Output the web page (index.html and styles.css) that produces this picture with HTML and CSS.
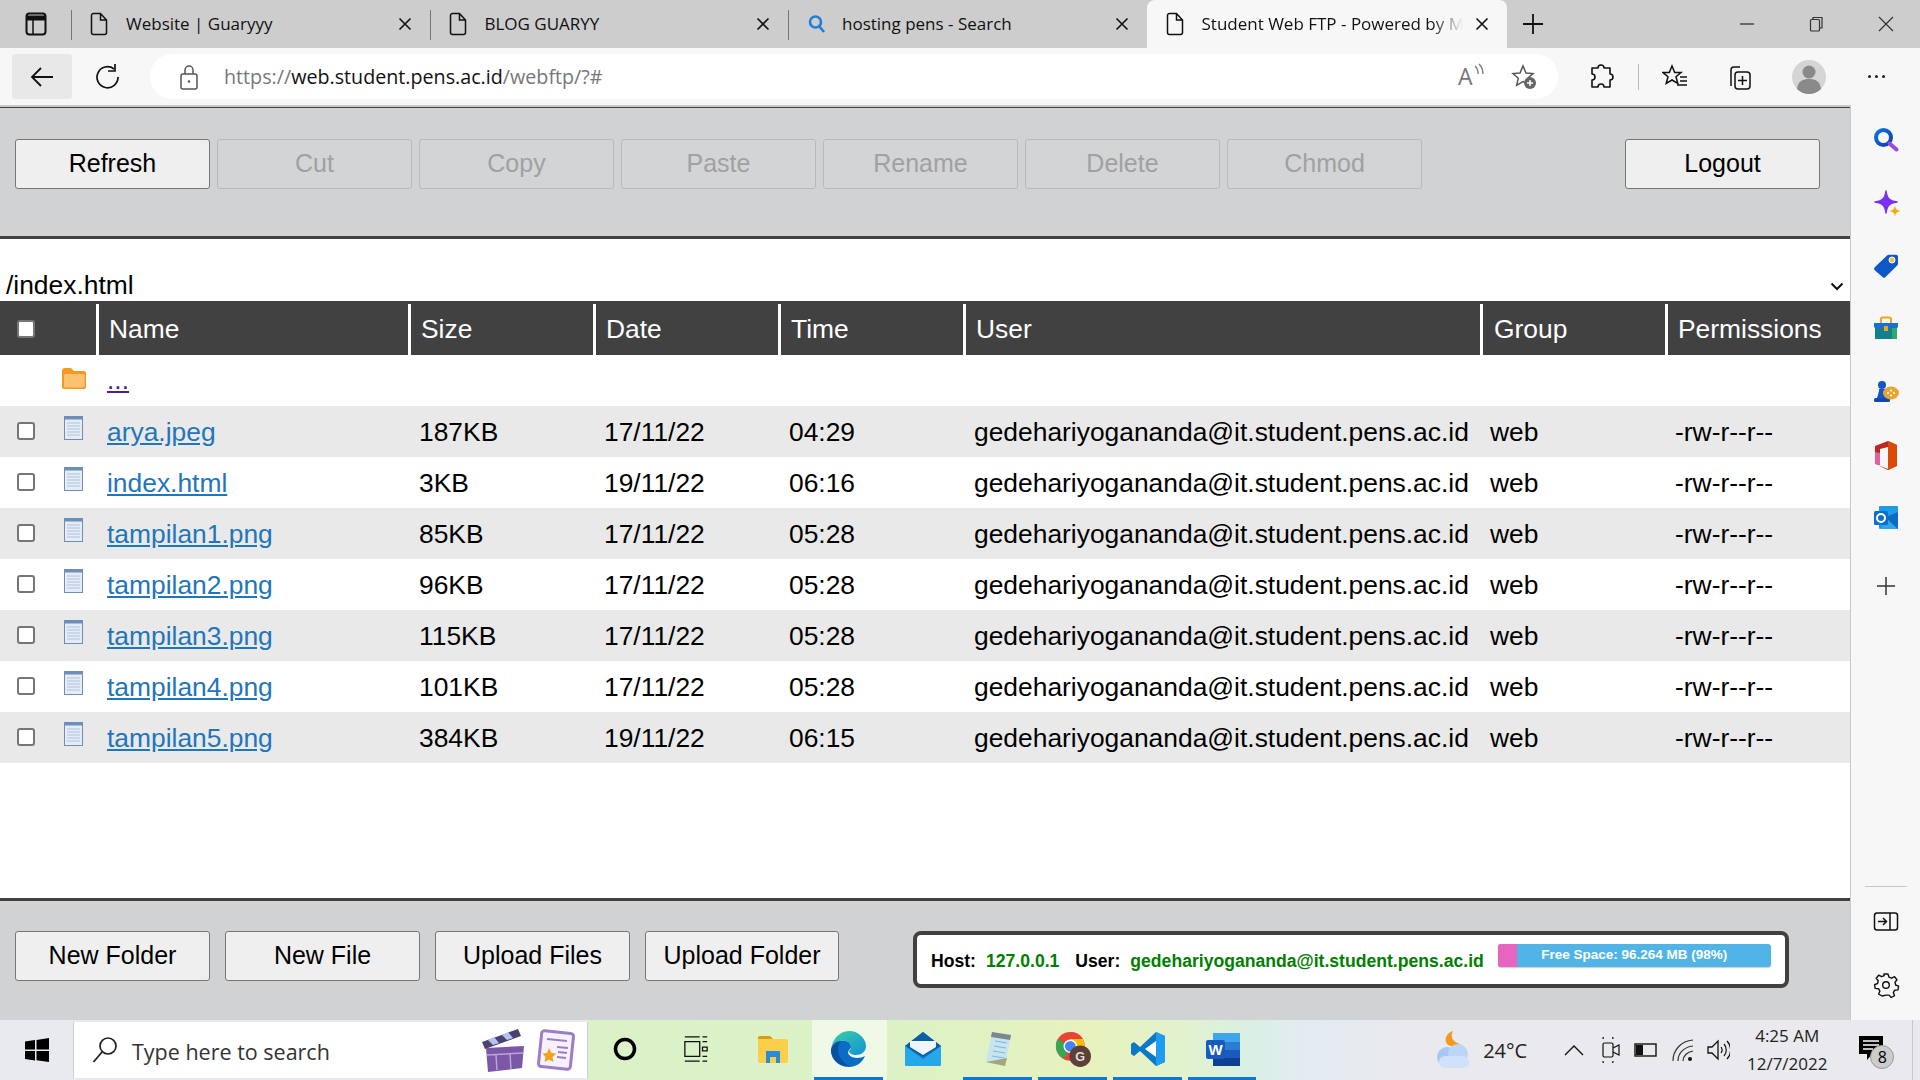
FILE: index.html
```html
<!DOCTYPE html>
<html lang="en">
<head>
<meta charset="utf-8">
<title>Student Web FTP - Powered by Monsta</title>
<link rel="stylesheet" href="styles.css">
</head>
<body>
<svg class="defs" width="0" height="0" aria-hidden="true">
  <symbol id="tabfile" viewBox="0 0 20 24"><path d="M2.500 3.500a2 2 0 0 1 2-2h7l6 6.500v12.500a2 2 0 0 1-2 2h-11a2 2 0 0 1-2-2zM11.500 1.500v6.500h6" fill="none" stroke="#111" stroke-width="1.500"/></symbol>
  <symbol id="x" viewBox="0 0 14 14"><path d="M1.500 1.500l11 11M12.500 1.500l-11 11" fill="none" stroke="#111" stroke-width="1.600"/></symbol>
  <symbol id="docicon" viewBox="0 0 20 25"><rect x="0.500" y="0.500" width="18" height="23" fill="#e6ecf6" stroke="#6f8db8"/><rect x="0.500" y="0.500" width="18" height="3" fill="#6f8db8"/><path d="M3 7h13M3 10h13M3 13h13M3 16h13M3 19h13" stroke="#aebfdc" stroke-width="1.200"/></symbol>
</svg>
<div class="browser">
  <header class="tabstrip">
    <div class="tabside">
      <svg class="ic22" viewBox="0 0 22 24"><rect x="1.500" y="1.500" width="19" height="21" rx="3" fill="none" stroke="#111" stroke-width="2"/><path d="M1.500 6h19" stroke="#111" stroke-width="5"/><path d="M8 8v14" stroke="#111" stroke-width="1.500"/></svg>
    </div>
    <div class="tab">
      <svg class="tabicon"><use href="#tabfile"/></svg>
      <span class="tabtitle">Website | Guaryyy</span>
      <svg class="tabclose"><use href="#x"/></svg>
    </div>
    <div class="tab">
      <svg class="tabicon"><use href="#tabfile"/></svg>
      <span class="tabtitle">BLOG GUARYY</span>
      <svg class="tabclose"><use href="#x"/></svg>
    </div>
    <div class="tab">
      <svg class="tabicon search" viewBox="0 0 18 20"><circle cx="7.500" cy="8" r="5.500" fill="none" stroke="#1f7fd6" stroke-width="2.600"/><path d="M11 12l5 6" stroke="#1f7fd6" stroke-width="2.600"/></svg>
      <span class="tabtitle">hosting pens - Search</span>
      <svg class="tabclose"><use href="#x"/></svg>
    </div>
    <div class="tab active">
      <svg class="tabicon"><use href="#tabfile"/></svg>
      <span class="tabtitle fade">Student Web FTP - Powered by Monsta</span>
      <svg class="tabclose"><use href="#x"/></svg>
    </div>
    <svg class="newtab" viewBox="0 0 22 22"><path d="M11 1v20M1 11h20" stroke="#111" stroke-width="1.800"/></svg>
    <div class="winctl">
      <svg class="wc wc-min" viewBox="0 0 16 16"><path d="M1 8h14" stroke="#333" stroke-width="1.300"/></svg>
      <svg class="wc" viewBox="0 0 16 16"><path d="M5 3V1.500h9v10.500h-2" fill="none" stroke="#333" stroke-width="1.200"/><rect x="2.500" y="3.500" width="9" height="11.500" rx="1" fill="none" stroke="#333" stroke-width="1.200"/></svg>
      <svg class="wc" viewBox="0 0 16 16"><path d="M1 1l14 14M15 1L1 15" stroke="#333" stroke-width="1.200"/></svg>
    </div>
  </header>

  <nav class="toolbar">
    <div class="navbtn hover">
      <svg class="ic26" viewBox="0 0 26 26"><path d="M24 13H3M12 4l-9 9 9 9" fill="none" stroke="#111" stroke-width="1.800"/></svg>
    </div>
    <div class="navbtn reload">
      <svg class="ic26" viewBox="0 0 26 26"><path d="M19 5a10.500 10.500 0 1 0 4 8" fill="none" stroke="#111" stroke-width="1.700"/><path d="M20 0v7h-7" fill="none" stroke="#111" stroke-width="1.700"/></svg>
    </div>
    <div class="urlbar">
      <svg class="lock" viewBox="0 0 20 26"><rect x="2" y="10" width="16" height="15" rx="2" fill="none" stroke="#555" stroke-width="1.500"/><path d="M6 10V6a4 4 0 0 1 8 0v4" fill="none" stroke="#555" stroke-width="1.500"/><circle cx="10" cy="17.500" r="1.300" fill="#555"/></svg>
      <span class="url"><span class="dim">https://</span>web.student.pens.ac.id<span class="dim">/webftp/?#</span></span>
      <span class="readaloud"><span class="readA">A</span><svg class="waves" viewBox="0 0 12 14"><path d="M2 3a10 10 0 0 1 3 8M6 1a14 14 0 0 1 4 10" fill="none" stroke="#777" stroke-width="1.300"/></svg></span>
      <svg class="ic26 favadd" viewBox="0 0 26 26"><path d="M12 2l3 7 7 .6-5.300 4.700 1.600 7-6.300-3.700-6.300 3.700 1.600-7L2 9.600 9 9z" fill="none" stroke="#555" stroke-width="1.500"/><circle cx="19" cy="19" r="6" fill="#666"/><path d="M19 16v6M16 19h6" stroke="#fff" stroke-width="1.500"/></svg>
    </div>
    <div class="tools">
      <svg class="ic26 tl-ext" viewBox="0 0 26 26"><path d="M10 4a3 3 0 0 1 6 0h6v6a3 3 0 0 1 0 6v7h-6a3 3 0 0 0-6 0H4v-7a3 3 0 0 0 0-6V4z" fill="none" stroke="#111" stroke-width="1.600" stroke-linejoin="round"/></svg>
      <span class="toolsep"></span>
      <svg class="ic26 tl-fav" viewBox="0 0 26 26"><path d="M10 2l2.700 6.500H19l-5 4.300 1.800 6.700L10 16l-5.800 3.500L6 12.800 1 8.500h6.300z" fill="none" stroke="#111" stroke-width="1.500"/><path d="M18 13h7M18 17h7M15 21h10" stroke="#111" stroke-width="1.500"/></svg>
      <svg class="ic26 tl-col" viewBox="0 0 26 26"><path d="M5 22V6a3 3 0 0 1 3-3h6" fill="none" stroke="#111" stroke-width="1.500"/><rect x="9" y="8" width="15" height="17" rx="3" fill="none" stroke="#111" stroke-width="1.500"/><path d="M16.500 12v9M12 16.500h9" stroke="#111" stroke-width="1.500"/></svg>
      <svg class="avatar" viewBox="0 0 34 34"><circle cx="17" cy="17" r="17" fill="#d5d5d5"/><circle cx="17" cy="12" r="6.500" fill="#8a8a8a"/><path d="M5 29c1-8 6-10 12-10s11 2 12 10a17 17 0 0 1-24 0z" fill="#8a8a8a"/></svg>
      <span class="dots"><i></i><i></i><i></i></span>
    </div>
  </nav>

  <div class="main">
    <main class="page">
      <section class="topbar">
        <button class="btn">Refresh</button>
        <button class="btn" disabled>Cut</button>
        <button class="btn" disabled>Copy</button>
        <button class="btn" disabled>Paste</button>
        <button class="btn" disabled>Rename</button>
        <button class="btn" disabled>Delete</button>
        <button class="btn" disabled>Chmod</button>
        <button class="btn logout">Logout</button>
      </section>

      <div class="pathrow">
        <span>/index.html</span>
        <svg class="chev" viewBox="0 0 14 9"><path d="M1.500 1.500L7 7l5.500-5.500" fill="none" stroke="#111" stroke-width="2"/></svg>
      </div>

      <div class="filetable">
        <div class="row head">
          <div class="hc first"><input type="checkbox" class="chk" aria-label="all"></div>
          <div class="hc">Name</div><div class="hc">Size</div><div class="hc">Date</div><div class="hc">Time</div><div class="hc">User</div><div class="hc">Group</div><div class="hc">Permissions</div>
        </div>
        <div class="row">
          <div class="c0"><svg class="foldericon" viewBox="0 0 24 21"><path d="M0 3a3 3 0 0 1 3-3h6l3 3h10a2 2 0 0 1 2 2v14a2 2 0 0 1-2 2H2a2 2 0 0 1-2-2z" fill="#f49a22"/><rect x="2" y="6" width="20.500" height="13.500" rx="1.500" fill="#fcc271"/></svg></div>
          <div class="c up"><a href="#" class="visited">...</a></div><div class="c"></div><div class="c"></div><div class="c"></div><div class="c"></div><div class="c"></div><div class="c"></div>
        </div>
        <div class="row alt">
          <div class="c0"><input type="checkbox" class="chk" aria-label="select"><svg class="docicon"><use href="#docicon"/></svg></div>
          <div class="c"><a href="#">arya.jpeg</a></div><div class="c">187KB</div><div class="c">17/11/22</div><div class="c">04:29</div><div class="c">gedehariyogananda@it.student.pens.ac.id</div><div class="c">web</div><div class="c">-rw-r--r--</div>
        </div>
        <div class="row">
          <div class="c0"><input type="checkbox" class="chk" aria-label="select"><svg class="docicon"><use href="#docicon"/></svg></div>
          <div class="c"><a href="#">index.html</a></div><div class="c">3KB</div><div class="c">19/11/22</div><div class="c">06:16</div><div class="c">gedehariyogananda@it.student.pens.ac.id</div><div class="c">web</div><div class="c">-rw-r--r--</div>
        </div>
        <div class="row alt">
          <div class="c0"><input type="checkbox" class="chk" aria-label="select"><svg class="docicon"><use href="#docicon"/></svg></div>
          <div class="c"><a href="#">tampilan1.png</a></div><div class="c">85KB</div><div class="c">17/11/22</div><div class="c">05:28</div><div class="c">gedehariyogananda@it.student.pens.ac.id</div><div class="c">web</div><div class="c">-rw-r--r--</div>
        </div>
        <div class="row">
          <div class="c0"><input type="checkbox" class="chk" aria-label="select"><svg class="docicon"><use href="#docicon"/></svg></div>
          <div class="c"><a href="#">tampilan2.png</a></div><div class="c">96KB</div><div class="c">17/11/22</div><div class="c">05:28</div><div class="c">gedehariyogananda@it.student.pens.ac.id</div><div class="c">web</div><div class="c">-rw-r--r--</div>
        </div>
        <div class="row alt">
          <div class="c0"><input type="checkbox" class="chk" aria-label="select"><svg class="docicon"><use href="#docicon"/></svg></div>
          <div class="c"><a href="#">tampilan3.png</a></div><div class="c">115KB</div><div class="c">17/11/22</div><div class="c">05:28</div><div class="c">gedehariyogananda@it.student.pens.ac.id</div><div class="c">web</div><div class="c">-rw-r--r--</div>
        </div>
        <div class="row">
          <div class="c0"><input type="checkbox" class="chk" aria-label="select"><svg class="docicon"><use href="#docicon"/></svg></div>
          <div class="c"><a href="#">tampilan4.png</a></div><div class="c">101KB</div><div class="c">17/11/22</div><div class="c">05:28</div><div class="c">gedehariyogananda@it.student.pens.ac.id</div><div class="c">web</div><div class="c">-rw-r--r--</div>
        </div>
        <div class="row alt">
          <div class="c0"><input type="checkbox" class="chk" aria-label="select"><svg class="docicon"><use href="#docicon"/></svg></div>
          <div class="c"><a href="#">tampilan5.png</a></div><div class="c">384KB</div><div class="c">19/11/22</div><div class="c">06:15</div><div class="c">gedehariyogananda@it.student.pens.ac.id</div><div class="c">web</div><div class="c">-rw-r--r--</div>
        </div>
      </div>

      <section class="bottombar">
        <div class="bottombtns">
          <button class="btn">New Folder</button>
          <button class="btn">New File</button>
          <button class="btn">Upload Files</button>
          <button class="btn">Upload Folder</button>
        </div>
        <div class="status">
          <span class="lbl">Host:</span><span class="val">127.0.0.1</span>
          <span class="lbl user">User:</span><span class="val">gedehariyogananda@it.student.pens.ac.id</span>
          <div class="spacebar"><span class="used"></span><span class="spacetext">Free Space: 96.264 MB (98%)</span></div>
        </div>
      </section>
    </main>

    <aside class="sidebar">
      <svg class="sb" viewBox="0 0 26 26"><defs><linearGradient id="g1" x1="0" y1="0" x2="1" y2="1"><stop offset="0" stop-color="#1173e6"/><stop offset="1" stop-color="#0b3fb0"/></linearGradient></defs><circle cx="10.500" cy="10.500" r="7.500" fill="none" stroke="url(#g1)" stroke-width="4"/><path d="M16.500 16.500l7 6" stroke="#9a49e0" stroke-width="4" stroke-linecap="round"/></svg>
      <svg class="sb" viewBox="0 0 26 26"><path d="M13 1c.8 7 3 10 11 11-8 1-10.200 4-11 11-.8-7-3-10-11-11 8-1 10.200-4 11-11z" fill="#7a2ff2" stroke="#7a2ff2" stroke-width="1.500" stroke-linejoin="round"/><path d="M22 15c.5 4 1.500 5 5.500 6-4 1-5 2-5.500 6-.5-4-1.500-5-5.500-6 4-1 5-2 5.500-6z" fill="#f4a90a"/></svg>
      <svg class="sb" viewBox="0 0 26 26"><path d="M1.500 14.500L14 2.500a3 3 0 0 1 2-.8h7a2 2 0 0 1 2 2v7a3 3 0 0 1-1 2L12.500 24a2 2 0 0 1-3 0l-8-7a2 2 0 0 1 0-2.500z" fill="#0d58c6"/><circle cx="19" cy="7" r="3" fill="#f7c33b" stroke="#fff"/></svg>
      <svg class="sb" viewBox="0 0 26 26"><path d="M8 7V3a1.500 1.500 0 0 1 1.500-1.500h7A1.500 1.500 0 0 1 18 3v4" fill="none" stroke="#e9a81d" stroke-width="2"/><rect x="2" y="11" width="22" height="12" fill="#13808f"/><rect x="19" y="11" width="5" height="12" fill="#2fa86b"/><path d="M1 7h24v4a2 2 0 0 1-2 1H3a2 2 0 0 1-2-1z" fill="#1a6fd4"/><rect x="11" y="10" width="4" height="5" fill="#f0a51d"/></svg>
      <svg class="sb" viewBox="0 0 26 26"><circle cx="9" cy="6" r="4" fill="#1456c9"/><path d="M6 10h6v2l2 7H4l2-7z" fill="#1456c9"/><rect x="1" y="19" width="16" height="4" rx="1.500" fill="#1048b0"/><ellipse cx="18" cy="14" rx="8" ry="6.500" fill="#e9a531"/><circle cx="15" cy="14" r="1.100" fill="#fff"/><circle cx="18" cy="11.500" r="1.100" fill="#fff"/><circle cx="21" cy="14" r="1.100" fill="#fff"/><circle cx="18" cy="16.500" r="1.100" fill="#fff"/></svg>
      <svg class="sb office" viewBox="0 0 26 30"><path d="M15 1L2 6v18l5 1V9l8-2v22l-11-4 11 5 9-4V5z" fill="#c2241f"/><path d="M15 1l9 4v20l-9 5z" fill="#dc4a0a"/><path d="M2 12l5 1v12l-5-1z" fill="#e0649a"/></svg>
      <svg class="sb" viewBox="0 0 26 26"><rect x="6" y="1" width="19" height="23" rx="1" fill="#1c9be8"/><path d="M13 12l12-5v17H7z" fill="#0f6cbd"/><path d="M13 13l12 11H7z" fill="#30a7ea"/><rect x="1" y="6" width="14" height="14" rx="1.500" fill="#0b6fd0"/><circle cx="8" cy="13" r="4" fill="none" stroke="#fff" stroke-width="2"/></svg>
      <svg class="sb plus" viewBox="0 0 20 20"><path d="M10 1v18M1 10h18" stroke="#333" stroke-width="1.500"/></svg>
      <div class="sbbottom">
        <span class="sbdiv"></span>
        <svg class="sb" viewBox="0 0 26 22"><rect x="1.500" y="2" width="23" height="17" rx="2.500" fill="none" stroke="#111" stroke-width="1.500"/><path d="M17 2v17" stroke="#111" stroke-width="1.500"/><path d="M5 10.500h8M10 7l3.500 3.500L10 14" fill="none" stroke="#111" stroke-width="1.500"/></svg>
        <svg class="sb" viewBox="0 0 26 26"><path d="M11 2h4l1 3.200 2.500 1 3-1.500 2.500 3-2 2.500.6 2.800 3 1.200-.6 3.700-3.300.3-1.400 2.400 1.200 3-3.300 1.900-2.200-2.400h-2.800L9 24l-3.300-1.900 1.200-3-1.400-2.400-3.300-.3-.6-3.700 3-1.200.6-2.800-2-2.500 2.500-3 3 1.500 2.500-1z" fill="none" stroke="#111" stroke-width="1.400" stroke-linejoin="round"/><circle cx="13" cy="13" r="3.300" fill="none" stroke="#111" stroke-width="1.400"/></svg>
      </div>
    </aside>
  </div>

  <footer class="taskbar">
    <div class="startcell">
      <svg class="start" viewBox="0 0 24 24"><path d="M0 3.500l10-1.400V11.500H0zM11.500 1.900L24 0v11.500H11.500zM0 13h10v9.400L0 21zM11.500 13H24v11l-12.500-1.800z" fill="#000"/></svg>
    </div>
    <div class="searchbox">
      <svg class="ssearch" viewBox="0 0 26 28"><circle cx="16" cy="10" r="8" fill="none" stroke="#222" stroke-width="1.700"/><path d="M10 16L1.500 26" stroke="#222" stroke-width="1.800"/></svg>
      <span class="stext">Type here to search</span>
      <svg class="simg" viewBox="0 0 46 44"><path d="M2 14L38 1l3 7L5 21z" fill="#4a4272"/><path d="M8 12l5 5 6-2-5-6zM22 7l5 5 6-2-5-6z" fill="#b7c2ee"/><path d="M6 20l38-2-2 22-34 4z" fill="#7b57a8"/><path d="M7 27l36-2M16 27l1 15M30 26l1 15" stroke="#b8a6d6" stroke-width="1.500"/></svg>
      <svg class="simg2" viewBox="0 0 38 42"><rect x="3" y="3" width="32" height="36" rx="3" transform="rotate(6 19 21)" fill="#f7f1fb" stroke="#9a7fc6" stroke-width="3"/><path d="M10 10l20 2M20 18l11 1M21 23l9 1M20 28l9 1" stroke="#9a7fc6" stroke-width="1.800"/><path d="M12 19l2.500 5 5 .5-4 3.500 1 5-4.500-2.500-4.500 2.500 1-5-3-3.500 4.500-.5z" fill="#f4a21c"/></svg>
    </div>
    <div class="tbitems">
      <span class="tbi"><svg class="t26" viewBox="0 0 26 26"><circle cx="13" cy="13" r="9.500" fill="none" stroke="#000" stroke-width="3.500"/></svg></span>
      <span class="tbi tv"><svg class="t26" viewBox="0 0 26 28"><path d="M1 1h16M1 27h16M1 6h16v16H1zM20 1h5M20 27h5M20 6h5M20 12h5v4h-5zM20 22h5" fill="none" stroke="#111" stroke-width="1.400"/></svg></span>
      <span class="tbi ex"><svg class="t32" viewBox="0 0 32 30"><path d="M1 4a2 2 0 0 1 2-2h10l3 3h-15z" fill="#d99a14"/><path d="M1 5h28a2 2 0 0 1 2 2v20a2 2 0 0 1-2 2H3a2 2 0 0 1-2-2z" fill="#fbcf4b"/><path d="M9 29V17h14v12h-4v-6h-6v6z" fill="#2a8bd9"/></svg></span>
      <span class="tbi on"><svg class="t36" viewBox="0 0 36 38"><defs><linearGradient id="e1" x1="0" y1="0" x2="1" y2="1"><stop offset="0" stop-color="#3ad1a5"/><stop offset="1" stop-color="#1192d6"/></linearGradient></defs><path d="M18 1c10 0 17 8 17 15 0 6-5 9-10 9-4 0-7-2-7-4 0-1 2-1 2-4 0-5-5-7-10-6-6 1-9 5-10 9C1 10 8 1 18 1z" fill="url(#e1)"/><path d="M0 20c1-5 5-9 10-9 5-1 10 1 10 6 0 1-1 2-2 3-3 4 2 8 8 8 3 0 6-1 8-2-3 7-9 11-16 11C8 37 0 30 0 20z" fill="#0b6cc6"/><path d="M10 11c-3 4-4 9-2 14 2 5 6 9 11 11C10 37 0 30 0 20c1-5 5-9 10-9z" fill="#0b4f9e"/></svg></span>
      <span class="tbi ml"><svg class="t36" viewBox="0 0 36 34"><path d="M18 0l18 14v18a2 2 0 0 1-2 2H2a2 2 0 0 1-2-2V14z" fill="#0f7dcb"/><path d="M18 0l18 14-18 11L0 14z" fill="#0b5ea6"/><path d="M5 9h26v6L18 23 5 15z" fill="#eef6fb"/><path d="M0 14l18 13 18-13v18a2 2 0 0 1-2 2H2a2 2 0 0 1-2-2z" fill="#27a6ea"/></svg></span>
      <span class="tbi und"><svg class="t36" viewBox="0 0 30 38"><path d="M8 2l19 3-6 31-19-4z" fill="#c7e4f0"/><path d="M8 2l19 3-1 5-19-3z" fill="#7a8a8c"/><path d="M11 11l12 2M10 16l12 2M9 21l12 2M8 26l12 2" stroke="#78bad6"/><path d="M2 32l19 4 2-8z" fill="#a4a47d"/></svg></span>
      <span class="tbi und"><svg class="t36" viewBox="0 0 40 42"><circle cx="17" cy="18" r="16" fill="#ea4335"/><path d="M17 18L3 10a16 16 0 0 0 7 22z" fill="#34a853"/><path d="M17 2a16 16 0 0 1 14 8H17z" fill="#ea4335"/><path d="M17 10h14a16 16 0 0 1-8 22z" fill="#fbbc05"/><circle cx="17" cy="18" r="7.500" fill="#fff"/><circle cx="17" cy="18" r="6" fill="#4285f4"/><circle cx="28" cy="29" r="12" fill="#5d4037"/><text x="28" y="34" class="gletter">G</text></svg></span>
      <span class="tbi und"><svg class="t36" viewBox="0 0 36 36"><path d="M26 1l9 4v26l-9 4L10 20l-6 5-3-2v-10l3-2 6 5z" fill="#0a7ac6"/><path d="M26 1l9 4v26l-9 4z" fill="#1f9cf0"/><path d="M26 10L15 18l11 8z" fill="#fff"/></svg></span>
      <span class="tbi und"><svg class="t36" viewBox="0 0 36 36"><rect x="8" y="2" width="27" height="33" rx="2" fill="#2b7cd3"/><rect x="8" y="2" width="27" height="9" fill="#41a5ee"/><rect x="8" y="19" width="27" height="8" fill="#185abd"/><rect x="8" y="27" width="27" height="8" fill="#103f91"/><rect x="1" y="9" width="19" height="19" rx="2" fill="#185abd"/><text x="10.500" y="24" class="wletter">W</text></svg></span>
    </div>
    <div class="tray">
      <svg class="weather" viewBox="0 0 38 40"><path d="M20 1c-3 5-1 11 7 13-3 3-10 3-13 0-3-4-1-11 6-13z" fill="#f39a1d"/><circle cx="14" cy="27" r="10" fill="#a6c8f2"/><circle cx="25" cy="24" r="10" fill="#bcd6f6"/><rect x="6" y="26" width="30" height="12" rx="6" fill="#cfe2fa"/></svg>
      <span class="temp">24°C</span>
      <svg class="trayic chevup" viewBox="0 0 20 12"><path d="M1 11l9-9 9 9" fill="none" stroke="#111" stroke-width="1.400"/></svg>
      <svg class="trayic meet" viewBox="0 0 20 26"><rect x="2" y="6" width="10" height="14" rx="1.500" fill="none" stroke="#111" stroke-width="1.200"/><path d="M12 11l6-3v10l-6-3M2 2a5 5 0 0 1 10 0M2 24a5 5 0 0 0 10 0" fill="none" stroke="#111" stroke-width="1.200"/></svg>
      <svg class="trayic batt" viewBox="0 0 24 16"><rect x="1" y="2" width="21" height="12" fill="none" stroke="#111" stroke-width="1.400"/><rect x="2" y="3" width="7" height="10" fill="#111"/></svg>
      <svg class="trayic wifi" viewBox="0 0 24 24"><path d="M2 23C2 12 10 3 22 2M7 23c0-8 6-14 15-15M12 23c0-5 4-9 10-10" fill="none" stroke="#333" stroke-width="1.200"/><circle cx="19" cy="21" r="2" fill="#111"/></svg>
      <svg class="trayic vol" viewBox="0 0 24 24"><path d="M2 9h4l6-6v18l-6-6H2z" fill="none" stroke="#111" stroke-width="1.300"/><path d="M15 9a5 5 0 0 1 0 6M18 6a9 9 0 0 1 0 12M21 3a13 13 0 0 1 0 18" fill="none" stroke="#111" stroke-width="1.200"/></svg>
      <div class="clock"><span>4:25 AM</span><span>12/7/2022</span></div>
      <div class="notif">
        <svg class="bubble" viewBox="0 0 24 24"><path d="M0 0h24v18H13l-5 6v-6H0z" fill="#000"/><path d="M4 5h16M4 9h16M4 13h10" stroke="#fff" stroke-width="1.400"/></svg>
        <span class="badge">8</span>
      </div>
    </div>
    <div class="showdesk"></div>
  </footer>
</div>
</body>
</html>
```

FILE: styles.css
```css
* { box-sizing: border-box; }
html, body { margin: 0; padding: 0; height: 100%; overflow: hidden; }
body { font-family: "Liberation Sans", Arial, sans-serif; color: #000; }
.defs { position: absolute; }
.browser { width: 1920px; height: 1080px; display: flex; flex-direction: column; }

/* tab strip */
.tabstrip { height: 48px; flex: none; background: #cdcdcd; display: flex; align-items: stretch; font-family: "Open Sans", sans-serif; font-size: 17px; }
.tabside { width: 71px; display: flex; align-items: center; justify-content: center; }
.ic22 { width: 22px; height: 24px; }
.tab { width: 358.500px; display: flex; align-items: center; padding: 0 18px; position: relative; }
.tab::before { content: ""; position: absolute; left: 0; top: 10px; height: 30px; width: 1px; background: #777; }
.tab.active::before { display: none; }
.tabicon { width: 20px; height: 24px; flex: none; margin-right: 17px; }
.tabicon.search { width: 18px; height: 20px; margin-right: 16px; margin-left: 2px; }
.tabtitle { flex: 1; white-space: nowrap; overflow: hidden; color: #111; padding-bottom: 2px; }
.tabclose { width: 14px; height: 14px; flex: none; }
.tab.active { background: #f7f7f7; border-radius: 8px 8px 0 0; width: 360px; }
.fade { -webkit-mask-image: linear-gradient(90deg, #000 88%, transparent 100%); mask-image: linear-gradient(90deg, #000 88%, transparent 100%); margin-right: 12px; }
.newtab { width: 22px; height: 22px; align-self: center; margin-left: 15px; }
.winctl { margin-left: auto; display: flex; align-items: center; gap: 54px; padding-right: 26px; }
.wc { width: 16px; height: 16px; }
.wc-min { margin-right: -1px; }

/* toolbar */
.toolbar { height: 57px; flex: none; background: #f7f7f7; display: flex; align-items: center; padding: 0 0 0 12px; }
.navbtn { height: 45px; display: flex; align-items: center; justify-content: center; border-radius: 3px; }
.navbtn.hover { background: #e8e8e8; margin-right: 15px; width: 60px; }
.navbtn.reload { width: 42px; margin-right: 21px; }
.ic26 { width: 26px; height: 26px; flex: none; }
.urlbar { width: 1408px; height: 45px; background: #fff; border-radius: 23px; display: flex; align-items: center; padding: 0 21px 0 29px; }
.lock { width: 20px; height: 26px; flex: none; margin-right: 25px; }
.url { flex: 1; font-family: "Open Sans", sans-serif; font-size: 19.700px; color: #111; white-space: nowrap; }
.dim { color: #777; }
.readaloud { width: 28px; height: 34px; margin: -2px 25px 0 1px; display: flex; align-items: flex-start; flex: none; }
.readA { font-family: "Open Sans", sans-serif; font-size: 23px; line-height: 34px; color: #777; }
.waves { width: 12px; height: 14px; margin-top: 4px; }
.tools { display: flex; align-items: center; flex: 1; }
.tl-ext { margin-left: 30px; }
.toolsep { width: 1px; height: 26px; background: #bbb; margin: 0 23px 0 24px; }
.tl-fav { margin-right: 38px; }
.tl-col { margin-right: 40px; }
.avatar { width: 34px; height: 34px; margin-right: 42px; }
.dots { display: flex; gap: 4px; }
.dots i { width: 3px; height: 3px; border-radius: 50%; background: #222; display: block; }

/* main */
.main { flex: 1; display: flex; min-height: 0; }
.page { width: 1851px; flex: none; display: flex; flex-direction: column; border-top: 2px solid #c9c9c9; border-right: 1px solid #c9c9c9; background: #fff; position: relative; }
.topbar { height: 132px; flex: none; background: #d1d2d4; border-top: 1px solid #414141; border-bottom: 3px solid #414141; padding: 31px 0 0 15px; display: flex; align-items: flex-start; gap: 7px; }
.btn { width: 195px; height: 50px; font-family: "Liberation Sans", sans-serif; font-size: 25px; background: #efefef; color: #000; border: 1px solid #767676; border-radius: 3px; padding: 0 0 2px; }
.btn:disabled { background: #d3d4d6; border-color: #b8b9bb; color: #a0a1a3; }
.logout { margin-left: auto; margin-right: 30px; }

.pathrow { height: 62px; flex: none; display: flex; align-items: flex-end; justify-content: space-between; padding: 0 6px; font-size: 26.400px; line-height: 32px; }
.chev { width: 14px; height: 9px; margin-bottom: 10px; }

.filetable { flex: none; font-size: 26.400px; }
.row { display: grid; grid-template-columns: 96px 312px 185px 185px 185px 517px 185px 185px; height: 51px; align-items: center; }
.row.alt { background: #e9e9e9; }
.row.head { height: 54px; background: #414141; color: #fff; align-items: stretch; }
.hc { margin-top: 3px; border-left: 3px solid #fff; padding: 0 0 0 10px; display: flex; align-items: center; }
.hc.first { border-left: 0; padding-left: 17px; }
.hc:nth-child(7) { padding-left: 11px; }
.c0 { display: flex; align-items: center; padding-left: 17px; height: 100%; }
.c { padding: 2px 0 0 11px; white-space: nowrap; }
.c:nth-child(n+7) { padding-left: 10px; }
.c a { color: #1f76bb; }
.c a.visited { color: #551a8b; }
.chk { appearance: none; -webkit-appearance: none; width: 18px; height: 18px; margin: 0; background: #fff; border: 2px solid #767676; border-radius: 3px; flex: none; }
.row:not(.head) .chk { margin-top: -2px; }
.head .chk { margin-top: -1px; }
.docicon { width: 20px; height: 25px; flex: none; margin: -6px 0 0 29px; }
.foldericon { width: 24px; height: 21px; margin: -4px 0 0 45px; }
.up { padding-top: 0; }

/* bottom */
.bottombar { margin-top: auto; height: 122px; flex: none; background: #d1d2d4; border-top: 3px solid #414141; padding: 30px 0 0 15px; display: flex; align-items: flex-start; }
.bottombtns { display: flex; gap: 15px; }
.bottombtns .btn:last-child { width: 194px; }
.status { width: 876px; height: 57px; margin-left: 74px; background: #fff; border: 4px solid #414141; border-radius: 8px; display: flex; align-items: flex-start; padding: 9px 0 0 14px; font-weight: bold; font-size: 17.600px; line-height: 34px; white-space: nowrap; }
.lbl { color: #000; margin-right: 10px; }
.lbl.user { margin-left: 16px; }
.val { color: #008000; }
.spacebar { position: relative; width: 273px; height: 23px; margin-left: 14px; background: #50b5e6; border-radius: 3px; box-shadow: 0 1px 1px #ccc; display: flex; align-items: center; justify-content: center; overflow: hidden; }
.used { position: absolute; left: 0; top: 0; bottom: 0; width: 19px; background: #e765c1; }
.spacetext { position: relative; color: #fff; font-size: 13.500px; line-height: 20px; margin-top: -2px; }

/* sidebar */
.sidebar { flex: 1; background: #f7f7f7; display: flex; flex-direction: column; align-items: center; padding-top: 22px; gap: 37px; }
.sb { width: 26px; height: 26px; flex: none; overflow: visible; }
.sb.office { height: 30px; margin: -2px 0; }
.sb.plus { width: 20px; height: 20px; margin-top: 8px; }
.sbbottom { margin-top: auto; display: flex; flex-direction: column; align-items: center; padding-bottom: 22px; }
.sbdiv { width: 42px; height: 1px; background: #c6c6c6; margin-bottom: 22px; }
.sbbottom .sb + .sb { margin-top: 37px; }

/* taskbar */
.taskbar { height: 60px; flex: none; display: flex; align-items: stretch; background: linear-gradient(90deg, #e8eaef 0, #e8eaef 587px, #dbf1c8 588px, #dcf2c6 900px, #e7f2bd 1090px, #e2f2cc 1180px, #d9efe4 1250px, #e2ecf0 1300px, #e9e9ee 1400px); }
.startcell { width: 73px; display: flex; align-items: center; justify-content: center; }
.start { width: 24px; height: 24px; }
.searchbox { width: 515px; margin: 2px 0; background: #fff; border: solid #d0d0d0; border-width: 0 1px; display: flex; align-items: center; padding-left: 18px; }
.ssearch { width: 26px; height: 28px; flex: none; margin-right: 14px; }
.stext { flex: 1; font-family: "Open Sans", sans-serif; font-size: 21.500px; color: #333; padding-top: 3px; white-space: nowrap; }
.simg { width: 46px; height: 48px; margin-right: 9px; flex: none; }
.simg2 { width: 42px; height: 42px; margin-right: 10px; flex: none; }
.tbitems { display: flex; }
.tbi { width: 74.700px; display: flex; align-items: center; justify-content: center; position: relative; padding-bottom: 3px; }
.tbi.tv svg { margin-right: 8px; }
.tbi.ex svg { margin-right: 4px; }
.tbi.ml svg { margin-right: 2px; }
.tbi.on { background: rgba(255,255,255,.55); }
.tbi.on::after, .tbi.und::after { content: ""; position: absolute; left: 2px; right: 4px; bottom: 0; height: 3px; background: #0a78d4; }
.t26 { width: 26px; height: 26px; }
.t32 { width: 32px; height: 30px; }
.t36 { width: 36px; height: 38px; }
.gletter { font-family: "Liberation Sans", sans-serif; font-size: 14px; font-weight: bold; fill: #ddd; text-anchor: middle; }
.wletter { font-family: "Liberation Sans", sans-serif; font-size: 15px; font-weight: bold; fill: #fff; text-anchor: middle; }
.tray { flex: 1; display: flex; align-items: center; padding-left: 173px; min-width: 0; }
.weather { width: 38px; height: 40px; flex: none; margin-right: 12px; }
.temp { font-family: "Open Sans", sans-serif; font-size: 20px; color: #222; margin-right: 37px; }
.trayic { flex: none; }
.chevup { width: 20px; height: 12px; margin-right: 17px; }
.meet { width: 20px; height: 26px; margin-right: 13px; }
.batt { width: 24px; height: 16px; margin-right: 13px; }
.wifi { width: 24px; height: 24px; margin-right: 11px; }
.vol { width: 24px; height: 24px; margin-right: 9px; }
.clock { width: 96px; display: flex; flex-direction: column; align-items: center; font-family: "Open Sans", sans-serif; font-size: 17px; line-height: 28px; color: #222; }
.notif { position: relative; width: 30px; height: 28px; margin-left: 24px; }
.bubble { width: 24px; height: 24px; position: absolute; left: 0; top: 0; }
.badge { position: absolute; left: 11px; top: 9px; width: 24px; height: 24px; border-radius: 50%; background: #ccc; border: 1px solid #999; font-family: "Open Sans", sans-serif; font-size: 16px; line-height: 22px; text-align: center; color: #000; }
.showdesk { width: 8px; flex: none; border-left: 1px solid #c8c8c8; }
```
